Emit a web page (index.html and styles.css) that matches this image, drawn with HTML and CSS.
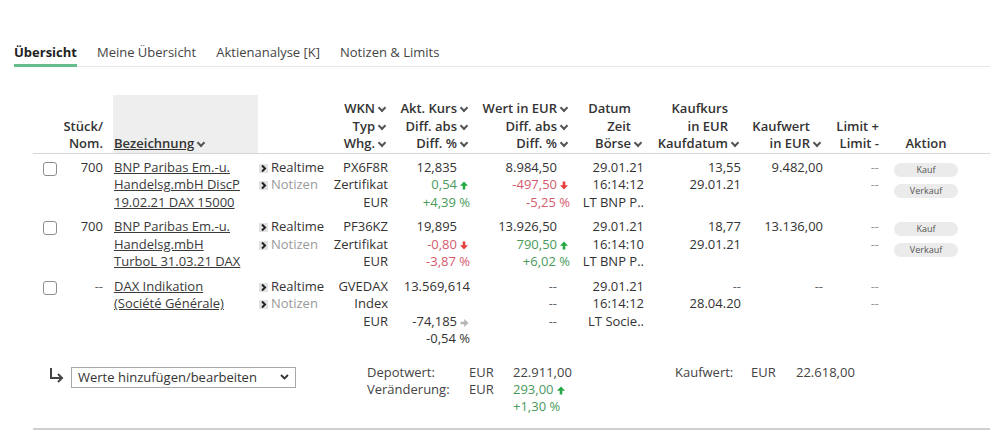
FILE: index.html
```html
<!DOCTYPE html>
<html>

<head>
  <meta charset="utf-8">
  <meta name="viewport" content="width=device-width">
  <title>Depot - Übersicht</title>
  <link rel="stylesheet" href="styles.css">
</head>

<body>
  <div class="page">

    <nav class="tabs">
      <a class="tab active" href="#">Übersicht</a>
      <a class="tab" href="#">Meine Übersicht</a>
      <a class="tab" href="#">Aktienanalyse [K]</a>
      <a class="tab" href="#">Notizen &amp; Limits</a>
    </nav>

    <table class="depot">
      <colgroup>
        <col class="w-check">
        <col class="w-qty">
        <col class="w-name">
        <col class="w-links">
        <col class="w-wkn">
        <col class="w-price">
        <col class="w-value">
        <col class="w-date">
        <col class="w-buy">
        <col class="w-buyval">
        <col class="w-limit">
        <col class="w-action">
      </colgroup>
      <thead>
        <tr>
          <th></th>
          <th class="qty">Stück/<br>Nom.</th>
          <th class="name sorted"><u>Bezeichnung</u><span class="sort"></span></th>
          <th></th>
          <th class="wkn">WKN<span class="sort"></span><br>Typ<span class="sort"></span><br>Whg.<span class="sort"></span></th>
          <th class="price">Akt. Kurs<span class="sort"></span><br>Diff. abs<span class="sort"></span><br>Diff. %<span class="sort"></span></th>
          <th class="value">Wert in EUR<span class="sort"></span><br>Diff. abs<span class="sort"></span><br>Diff. %<span class="sort"></span></th>
          <th class="date">Datum<span class="sort none"></span><br>Zeit<span class="sort none"></span><br>Börse<span class="sort"></span></th>
          <th class="buy">Kaufkurs<span class="sort none"></span><br>in EUR<span class="sort none"></span><br>Kaufdatum<span class="sort"></span></th>
          <th class="buyval">Kaufwert<span class="sort none"></span><br>in EUR<span class="sort"></span></th>
          <th class="limit">Limit +<br>Limit -</th>
          <th class="action">Aktion</th>
        </tr>
      </thead>
      <tbody>
        <!-- BNP DiscP -->
        <tr>
          <td><input class="check" type="checkbox"></td>
          <td class="qty">700</td>
          <td class="name"><a href="#">BNP Paribas Em.-u.<br>Handelsg.mbH DiscP<br>19.02.21 DAX 15000</a></td>
          <td class="links">
            <div><span class="go"><svg viewBox="0 0 9 9"><path d="M3 1.5 L6 4.5 L3 7.5"/></svg></span>Realtime</div>
            <div class="muted"><span class="go"><svg viewBox="0 0 9 9"><path d="M3 1.5 L6 4.5 L3 7.5"/></svg></span>Notizen</div>
          </td>
          <td class="wkn">PX6F8R<br>Zertifikat<br>EUR</td>
          <td class="price">
            <div>12,835<span class="arr"></span></div>
            <div class="up">0,54<span class="arr"><svg viewBox="0 0 8 9"><path d="M4 0.5 L8 4.8 H5.3 V8.5 H2.7 V4.8 H0 Z"/></svg></span></div>
            <div class="up">+4,39 %</div>
          </td>
          <td class="value">
            <div>8.984,50<span class="arr"></span></div>
            <div class="down">-497,50<span class="arr"><svg viewBox="0 0 8 9"><path d="M4 8.5 L8 4.2 H5.3 V0.5 H2.7 V4.2 H0 Z"/></svg></span></div>
            <div class="down">-5,25 %</div>
          </td>
          <td class="date">29.01.21<br>16:14:12<br>LT BNP P..</td>
          <td class="buy">13,55<br>29.01.21</td>
          <td class="buyval">9.482,00</td>
          <td class="limit">--<br>--</td>
          <td class="action"><a class="btn" href="#">Kauf</a><a class="btn" href="#">Verkauf</a></td>
        </tr>
        <!-- BNP TurboL -->
        <tr>
          <td><input class="check" type="checkbox"></td>
          <td class="qty">700</td>
          <td class="name"><a href="#">BNP Paribas Em.-u.<br>Handelsg.mbH<br>TurboL 31.03.21 DAX</a></td>
          <td class="links">
            <div><span class="go"><svg viewBox="0 0 9 9"><path d="M3 1.5 L6 4.5 L3 7.5"/></svg></span>Realtime</div>
            <div class="muted"><span class="go"><svg viewBox="0 0 9 9"><path d="M3 1.5 L6 4.5 L3 7.5"/></svg></span>Notizen</div>
          </td>
          <td class="wkn">PF36KZ<br>Zertifikat<br>EUR</td>
          <td class="price">
            <div>19,895<span class="arr"></span></div>
            <div class="down">-0,80<span class="arr"><svg viewBox="0 0 8 9"><path d="M4 8.5 L8 4.2 H5.3 V0.5 H2.7 V4.2 H0 Z"/></svg></span></div>
            <div class="down">-3,87 %</div>
          </td>
          <td class="value">
            <div>13.926,50<span class="arr"></span></div>
            <div class="up">790,50<span class="arr"><svg viewBox="0 0 8 9"><path d="M4 0.5 L8 4.8 H5.3 V8.5 H2.7 V4.8 H0 Z"/></svg></span></div>
            <div class="up">+6,02 %</div>
          </td>
          <td class="date">29.01.21<br>16:14:10<br>LT BNP P..</td>
          <td class="buy">18,77<br>29.01.21</td>
          <td class="buyval">13.136,00</td>
          <td class="limit">--<br>--</td>
          <td class="action"><a class="btn" href="#">Kauf</a><a class="btn" href="#">Verkauf</a></td>
        </tr>
        <!-- DAX Indikation -->
        <tr>
          <td><input class="check" type="checkbox"></td>
          <td class="qty dim">--</td>
          <td class="name"><a href="#">DAX Indikation<br>(Société Générale)</a></td>
          <td class="links">
            <div><span class="go"><svg viewBox="0 0 9 9"><path d="M3 1.5 L6 4.5 L3 7.5"/></svg></span>Realtime</div>
            <div class="muted"><span class="go"><svg viewBox="0 0 9 9"><path d="M3 1.5 L6 4.5 L3 7.5"/></svg></span>Notizen</div>
          </td>
          <td class="wkn">GVEDAX<br>Index<br>EUR</td>
          <td class="price">
            <div>13.569,614</div>
            <div>&nbsp;</div>
            <div>-74,185<span class="arr flat"><svg viewBox="0 0 9 8"><path d="M8.5 4 L4.2 8 V5.3 H0.5 V2.7 H4.2 V0 Z"/></svg></span></div>
            <div>-0,54 %</div>
          </td>
          <td class="value dim">
            <div>--<span class="arr"></span></div>
            <div>--<span class="arr"></span></div>
            <div>--<span class="arr"></span></div>
          </td>
          <td class="date">29.01.21<br>16:14:12<br>LT Socie..</td>
          <td class="buy"><span class="dim">--</span><br>28.04.20</td>
          <td class="buyval dim">--</td>
          <td class="limit">--<br>--</td>
          <td class="action"></td>
        </tr>
      </tbody>
    </table>

    <div class="summary">
      <div class="add">
        <svg class="hook" viewBox="0 0 16 16"><path d="M3 1 V11 H13.5 M10 7 L14 11 L10 15"/></svg>
        <div class="select">
          <span>Werte hinzufügen/bearbeiten</span>
          <svg viewBox="0 0 9 6"><path d="M1 1 L4.5 4.5 L8 1"/></svg>
        </div>
      </div>
      <div class="totals depot-total">
        <span>Depotwert:</span><span>EUR</span><span>22.911,00</span>
        <span>Veränderung:</span><span>EUR</span><span class="up">293,00<span class="arr"><svg viewBox="0 0 8 9"><path d="M4 0.5 L8 4.8 H5.3 V8.5 H2.7 V4.8 H0 Z"/></svg></span></span>
        <span></span><span></span><span class="up">+1,30 %</span>
      </div>
      <div class="totals buy-total">
        <span>Kaufwert:</span><span>EUR</span><span>22.618,00</span>
      </div>
    </div>

  </div>
</body>

</html>
```

FILE: styles.css
```css
body {
  margin: 0;
  font-family: "Open Sans", "Liberation Sans", sans-serif;
  font-size: 13px;
  color: #333;
  background: #fff;
}

.page {
  padding: 36px 9px 0 14px;
}

/* tabs */
.tabs {
  display: flex;
  gap: 20px;
  border-bottom: 1px solid #e8e8e8;
}

.tab {
  padding: 7px 0 3px;
  line-height: 18px;
  margin-bottom: -1px;
  border-bottom: 3px solid transparent;
  color: #444;
  text-decoration: none;
}

.tab.active {
  font-weight: 700;
  color: #222;
  border-color: #66bd8c;
}

/* table */
.depot {
  margin: 28px 0 0 19px;
  width: 957px;
  border-collapse: collapse;
  table-layout: fixed;
}

.w-check { width: 25px; }
.w-qty { width: 55px; }
.w-name { width: 145px; }
.w-links { width: 72px; }
.w-wkn { width: 62px; }
.w-price { width: 82px; }
.w-value { width: 100px; }
.w-date { width: 74px; }
.w-buy { width: 98px; }
.w-buyval { width: 82px; }
.w-limit { width: 56px; }
.w-action { width: 106px; }

th,
td {
  line-height: 17.5px;
  text-align: right;
  white-space: nowrap;
  padding: 0 4px 0 0;
}

th {
  font-weight: 600;
  color: #333;
  vertical-align: bottom;
  padding-top: 5px;
  border-bottom: 1px solid #d6d6d6;
}

td {
  vertical-align: top;
  padding-top: 5px;
  padding-bottom: 2px;
}

.qty { padding-right: 10px; }
.buy, .buyval, .limit { padding-right: 5px; }

th.name,
td.name,
td.links {
  text-align: left;
  padding-left: 1px;
}

th.sorted {
  background: #eeeeee;
}

.name a {
  color: #3a3a3a;
  text-decoration: underline;
}

.action {
  text-align: center;
  padding-right: 22px;
}

.sort {
  display: inline-block;
  position: relative;
  width: 13px;
  height: 10px;
}

.sort::after {
  content: "";
  position: absolute;
  left: 4px;
  top: 2px;
  width: 4px;
  height: 4px;
  border: solid #555;
  border-width: 0 2px 2px 0;
  transform: rotate(45deg);
}

.sort.none::after {
  display: none;
}

.check {
  appearance: none;
  display: block;
  width: 14px;
  height: 14px;
  margin: 3px 0 0 10px;
  border: 1px solid #8e8e8e;
  border-radius: 3px;
  background: #fff;
}

.go {
  display: inline-block;
  width: 9px;
  height: 9px;
  margin-right: 3px;
  background: #e2e2e2;
  vertical-align: -1px;
}

.go svg {
  display: block;
  width: 9px;
  height: 9px;
  fill: none;
  stroke: #222;
  stroke-width: 2;
}

.muted { color: #9a9a9a; }
.dim { color: #666; }
td.limit { color: #9a9a9a; }

.up { color: #4a9a5c; }
.down { color: #d45b6d; }

.arr {
  display: inline-block;
  width: 10px;
  margin-left: 3px;
  text-align: left;
}

.arr svg {
  width: 8px;
  height: 9px;
  vertical-align: -1px;
}

.up .arr svg { fill: #25a844; }
.down .arr svg { fill: #e5403d; }
.flat svg { fill: #b5b5b5; width: 9px; height: 8px; }

.btn {
  display: block;
  width: 64px;
  height: 14px;
  margin: 4px auto 0;
  border-radius: 7px;
  background: #ebebeb;
  color: #555;
  font-size: 9px;
  line-height: 14px;
  text-decoration: none;
}

.btn + .btn {
  margin-top: 7px;
}

/* summary */
.summary {
  display: flex;
  align-items: flex-start;
  width: 942px;
  margin: 14px 0 0 19px;
  padding: 0 0 13px 15px;
  border-bottom: 3px solid #d0d0d0;
}

.add {
  display: flex;
  align-items: flex-start;
  gap: 7px;
  width: 319px;
  padding-top: 3px;
}

.hook {
  width: 16px;
  height: 16px;
  fill: none;
  stroke: #444;
  stroke-width: 2;
}

.select {
  display: flex;
  justify-content: space-between;
  align-items: center;
  width: 211px;
  height: 19px;
  padding: 0 6px 0 6px;
  border: 1px solid #a8a8a8;
  color: #333;
  line-height: 19px;
}

.select svg {
  width: 9px;
  height: 6px;
  fill: none;
  stroke: #333;
  stroke-width: 1.8;
}

.totals {
  display: grid;
  line-height: 17px;
  color: #444;
}

.depot-total {
  grid-template-columns: 102px 44px 106px;
  width: 308px;
}

.buy-total {
  grid-template-columns: 76px 45px auto;
}
```
